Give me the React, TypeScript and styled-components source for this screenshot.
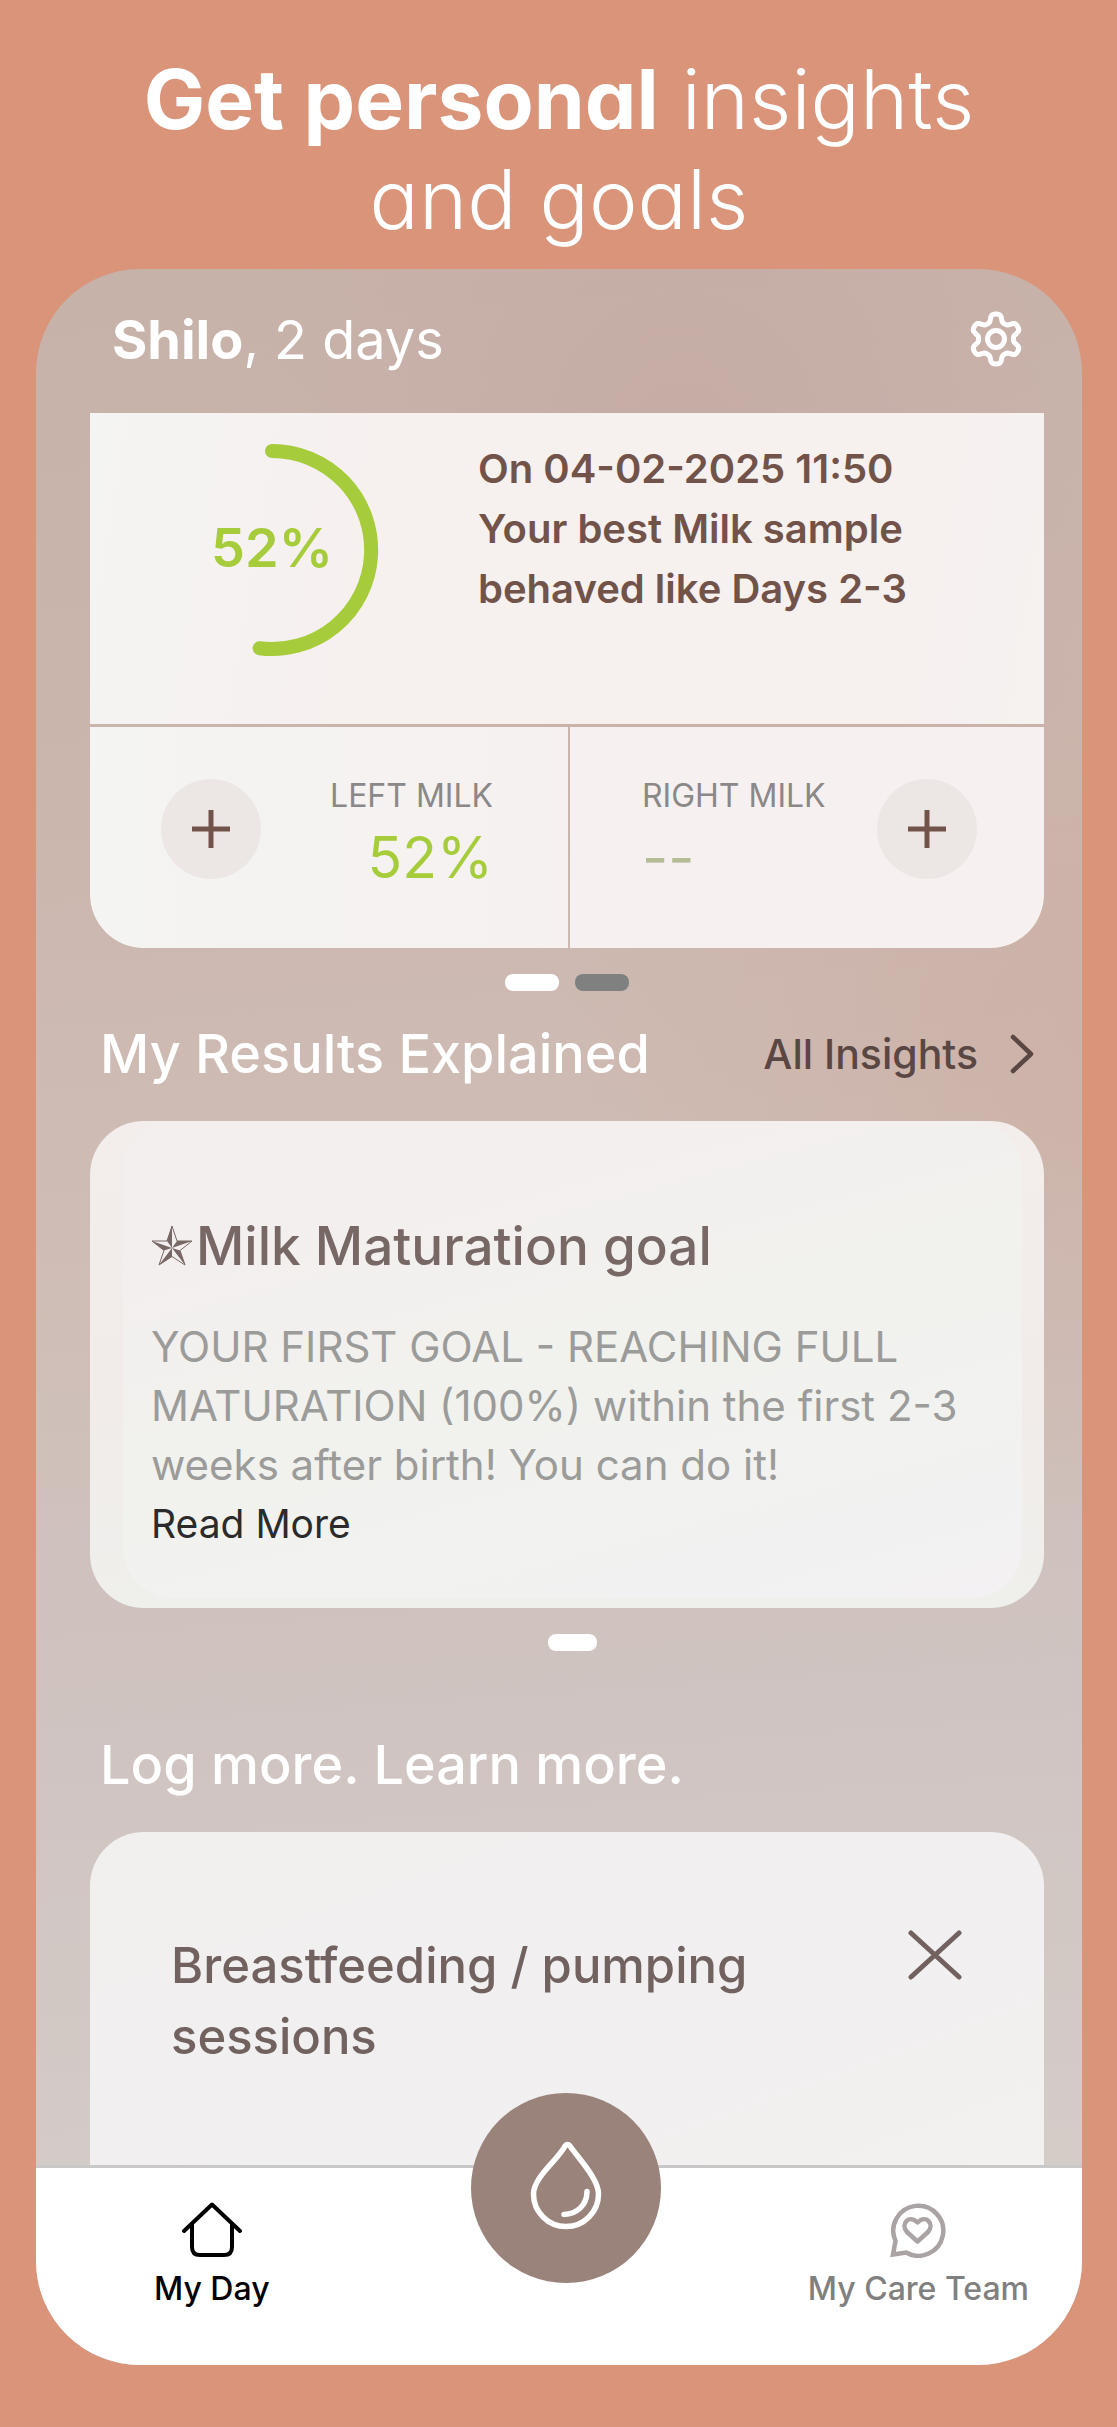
import React from 'react';
import styled, { createGlobalStyle } from 'styled-components';

const Global = createGlobalStyle`
  *, *::before, *::after { box-sizing: border-box; }
  body { margin: 0; background: #d9947a; font-family: Inter, Roboto, sans-serif; }
  h1, h2, h3, p { margin: 0; font-weight: inherit; }
  button { border: 0; padding: 0; background: none; font: inherit; color: inherit; cursor: pointer; }
  a { color: inherit; text-decoration: none; }
  svg { display: block; flex: none; }
`;

const Page = styled.div`
  padding: 50px 35px 62px 36px;
`;

const Headline = styled.h1`
  height: 219px;
  color: #fff;
  font-size: 82px;
  line-height: 100px;
  font-weight: 300;
  text-align: center;
  font-feature-settings: 'cv11';
  strong { font-weight: 700; }
`;

const Phone = styled.main`
  border-radius: 104px;
  overflow: hidden;
  background:
    radial-gradient(ellipse 45% 24% at 62% 8%, rgba(196, 170, 163, 0.7), transparent),
    radial-gradient(ellipse 50% 26% at 100% 36%, rgba(204, 176, 166, 0.8), transparent),
    linear-gradient(176deg, #c7b2aa 0%, #cbb6ae 25%, #cfbdb5 45%, #cfc3c0 66%, #d3ccc7 90%);
`;

const TopBar = styled.header`
  height: 144px;
  padding: 0 60px 4px 76px;
  display: flex;
  align-items: center;
  justify-content: space-between;
  color: #fff;
`;

const BabyName = styled.p`
  font-size: 54px;
  line-height: 64px;
  padding-top: 2px;
  strong { font-weight: 700; }
`;

const Content = styled.div`
  padding: 0 38px 0 54px;
`;

const MilkCard = styled.section`
  border-radius: 0 0 54px 54px;
  overflow: hidden;
`;

const Summary = styled.div`
  height: 311px;
  padding: 30px 0 0 75px;
  display: flex;
  background: linear-gradient(100deg, #f4f4f2, #f6f0ef 30%, #f6f0ef 85%, #f5f2f0);
`;

const Gauge = styled.div`
  width: 214px;
  height: 214px;
  display: grid;
  place-items: center;
  color: #a6cc3c;
  font-size: 54px;
  font-weight: 600;
  svg, span { grid-area: 1 / 1; }
  span { padding-bottom: 6px; }
`;

const SummaryText = styled.p`
  margin-top: -4px;
  padding-left: 99px;
  color: #72534a;
  font-size: 40px;
  line-height: 60px;
  font-weight: 600;
`;

const Sides = styled.div`
  display: grid;
  grid-template-columns: 239fr 237fr;
  gap: 2px;
  padding-top: 3px;
`;

const Side = styled.div<{ $end?: boolean }>`
  height: 221px;
  padding: ${(p) => (p.$end ? '0 67px 18px 72px' : '0 75px 18px 71px')};
  display: flex;
  align-items: center;
  justify-content: space-between;
  text-align: ${(p) => (p.$end ? 'left' : 'right')};
  background: ${(p) => (p.$end ? '#f6f1f0' : 'linear-gradient(90deg, #f4f4f2, #f6f1f0)')};
`;

const Reading = styled.div`
  padding-top: 18px;
`;

const RoundButton = styled.button`
  width: 100px;
  height: 100px;
  border-radius: 50%;
  background: #ece7e5;
  display: grid;
  place-items: center;
`;

const SideLabel = styled.p`
  color: #8a8888;
  font-size: 32px;
  line-height: 40px;
`;

const SideValue = styled.p<{ $empty?: boolean }>`
  color: ${(p) => (p.$empty ? '#b4bc95' : '#a6cc3c')};
  font-size: 57px;
  line-height: 84px;
`;

const Pager = styled.div<{ $inset?: number }>`
  display: flex;
  justify-content: center;
  gap: 16px;
  padding-top: 26px;
  padding-left: ${(p) => p.$inset ?? 0}px;
`;

const Pill = styled.span<{ $off?: boolean; $w: number }>`
  width: ${(p) => p.$w}px;
  height: 17px;
  border-radius: 8px;
  background: ${(p) => (p.$off ? '#808080' : '#fff')};
`;

const SectionHead = styled.div<{ $space: number }>`
  padding: ${(p) => p.$space}px 10px 0 10px;
  height: ${(p) => p.$space + 99}px;
  display: flex;
  justify-content: space-between;
`;

const SectionTitle = styled.h2`
  color: #fff;
  font-size: 54px;
  line-height: 64px;
  font-weight: 500;
`;

const AllLink = styled.a`
  height: 64px;
  display: flex;
  align-items: center;
  gap: 32px;
  color: #5a4643;
  font-size: 41px;
  font-weight: 500;
`;

const GoalCard = styled.article`
  border-radius: 54px;
  padding: 0 22px 10px 33px;
  background: linear-gradient(180deg, #f3edec, #f1ecea 60%, #efefec);
`;

const GoalBody = styled.div`
  height: 477px;
  padding: 93px 0 0 28px;
  border-radius: 50px;
  background: linear-gradient(165deg, #f3efee 20%, #f1f2ee 55%, #f3f1f3);
`;

const GoalTitle = styled.h3`
  display: flex;
  align-items: center;
  gap: 3px;
  color: #776866;
  font-size: 53px;
  line-height: 64px;
  font-weight: 500;
`;

const GoalText = styled.p`
  padding-top: 39px;
  color: #9b9b9a;
  font-size: 42px;
  line-height: 59px;
`;

const ReadMore = styled.a`
  color: #2b2b2b;
  font-size: 39px;
  line-height: 59px;
`;

const LogCard = styled.article`
  height: 333px;
  border-radius: 54px 54px 0 0;
  padding: 98px 82px 0 81px;
  display: flex;
  align-items: flex-start;
  justify-content: space-between;
  background: linear-gradient(160deg, #f1f0ee, #f1eff0 50%, #f2f1ef);
  color: #716260;
  h3 {
    max-width: 640px;
    font-size: 49px;
    line-height: 71px;
    font-weight: 500;
  }
`;

const NavBar = styled.nav`
  position: relative;
  height: 200px;
  border-top: 3px solid #c9c8c8;
  background: #fff;
  padding: 34px 53px 0 118px;
  display: flex;
  justify-content: space-between;
`;

const NavItem = styled.a<{ $active?: boolean }>`
  display: flex;
  flex-direction: column;
  align-items: center;
  gap: 11px;
  height: 108px;
  font-size: 32px;
  line-height: 40px;
  font-weight: 500;
  color: ${(p) => (p.$active ? '#000' : '#808080')};
`;

const DropButton = styled.button`
  position: absolute;
  left: calc(50% + 7px);
  top: -75px;
  transform: translateX(-50%);
  width: 190px;
  height: 190px;
  padding-bottom: 4px;
  border-radius: 50%;
  background: #9a837b;
  display: grid;
  place-items: center;
`;

const Plus = () => (
  <svg width="40" height="40" viewBox="0 0 40 40" stroke="#72534a" strokeWidth="5">
    <path d="M20 1v38M1 20h38" />
  </svg>
);

/* Outline of a six-lobed cog, traced around its centre. */
const cogOutline =
  Array.from({ length: 180 }, (_, i) => {
    const angle = (i * Math.PI) / 90;
    const r = 21.2 + 4 * Math.tanh(1.8 * Math.cos(6 * angle));
    const x = 27 + r * Math.sin(angle);
    const y = 29 - r * Math.cos(angle);
    return `${i ? 'L' : 'M'}${x.toFixed(2)} ${y.toFixed(2)}`;
  }).join('') + 'Z';

export default function App() {
  return (
    <>
      <Global />
      <Page>
        <Headline>
          <strong>Get personal</strong> insights
          <br />
          and goals
        </Headline>
        <Phone>
          <TopBar>
            <BabyName>
              <strong>Shilo</strong>, 2 days
            </BabyName>
            <button aria-label="Settings">
              <svg width="52" height="58" viewBox="1 0 52 58" fill="none" stroke="#fff" strokeWidth="5" strokeLinejoin="round">
                <path d={cogOutline} />
                <circle cx="27" cy="29" r="8.5" />
              </svg>
            </button>
          </TopBar>
          <Content>
            <MilkCard>
              <Summary>
                <Gauge>
                  <svg width="214" height="214" viewBox="0 0 214 214" fill="none" stroke="#a6cc3c" strokeWidth="14" strokeLinecap="round">
                    <path d="M107 8A99 99 0 1 1 94.6 205.2" />
                  </svg>
                  <span>52%</span>
                </Gauge>
                <SummaryText>
                  On 04-02-2025 11:50
                  <br />
                  Your best Milk sample
                  <br />
                  behaved like Days 2-3
                </SummaryText>
              </Summary>
              <Sides>
                <Side>
                  <RoundButton aria-label="Add left milk sample"><Plus /></RoundButton>
                  <Reading>
                    <SideLabel>LEFT MILK</SideLabel>
                    <SideValue>52%</SideValue>
                  </Reading>
                </Side>
                <Side $end>
                  <Reading>
                    <SideLabel>RIGHT MILK</SideLabel>
                    <SideValue $empty>--</SideValue>
                  </Reading>
                  <RoundButton aria-label="Add right milk sample"><Plus /></RoundButton>
                </Side>
              </Sides>
            </MilkCard>
            <Pager>
              <Pill $w={54} />
              <Pill $w={54} $off />
            </Pager>
            <SectionHead $space={31}>
              <SectionTitle>My Results Explained</SectionTitle>
              <AllLink href="#insights">
                All Insights
                <svg width="24" height="40" viewBox="0 0 24 40" fill="none" stroke="#5a4643" strokeWidth="4.5" strokeLinecap="round" strokeLinejoin="round">
                  <path d="M3 3l18 17L3 37" />
                </svg>
              </AllLink>
            </SectionHead>
            <GoalCard>
              <GoalBody>
                <GoalTitle>
                  <svg width="42" height="42" viewBox="0 0 42 42" stroke="#776866" strokeWidth="1" strokeLinejoin="round">
                    <path fill="none" d="M21 1l5 15h15L29 25.5 34 40 21 31.5 8 40l5-14.500L1 16h15z" />
                    <path fill="#776866" stroke="none" d="M21 1v22l-5-7zM41 16L21 23l5-7zM34 40L21 23l8 2.5zM8 40l13-17v8.5zM1 16l20 7-8 2.5z" />
                  </svg>
                  Milk Maturation goal
                </GoalTitle>
                <GoalText>
                  YOUR FIRST GOAL - REACHING FULL
                  <br />
                  MATURATION (100%) within the first 2-3
                  <br />
                  weeks after birth! You can do it!
                </GoalText>
                <ReadMore href="#goal">Read More</ReadMore>
              </GoalBody>
            </GoalCard>
            <Pager $inset={10}>
              <Pill $w={49} />
            </Pager>
            <SectionHead $space={82}>
              <SectionTitle>Log more. Learn more.</SectionTitle>
            </SectionHead>
            <LogCard>
              <h3>Breastfeeding / pumping sessions</h3>
              <button aria-label="Dismiss">
                <svg width="54" height="50" viewBox="0 0 54 50" stroke="#716260" strokeWidth="5" strokeLinecap="round">
                  <path d="M3 3l48 44M51 3L3 47" />
                </svg>
              </button>
            </LogCard>
          </Content>
          <NavBar>
            <NavItem href="#day" $active>
              <svg width="60" height="56" viewBox="0 0 60 56" fill="none" stroke="#000" strokeWidth="4" strokeLinecap="round" strokeLinejoin="round">
                <path d="M2 29L30 2.500l28 26.500M10 23v22q0 8 8 8h24q8 0 8-8V23" />
              </svg>
              My Day
            </NavItem>
            <NavItem href="#care">
              <svg width="56" height="56" viewBox="0 0 56 56" fill="none" stroke="#aaa3a3" strokeWidth="4.5">
                <path d="M3 52.5L5.5 39A25 25 0 1 1 16 50.500z" />
                <path strokeLinejoin="round" d="M27.500 39.500L17 30C10 22 19 12 27.500 20.500 36 12 45 22 38 30z" />
              </svg>
              My Care Team
            </NavItem>
            <DropButton aria-label="Test milk">
              <svg width="74" height="90" viewBox="0 -2 74 90" fill="none" stroke="#fff" strokeWidth="5.5" strokeLinecap="round" strokeLinejoin="round">
                <path d="M36 3C29 17 4.5 34 4.5 51A32.500 32.500 0 0 0 69.500 51C69.500 36 50 16 41 3Q38.500 0 36 3z" />
                <path d="M58 48.500C58 62 48 71 35 71.500" />
              </svg>
            </DropButton>
          </NavBar>
        </Phone>
      </Page>
    </>
  );
}
